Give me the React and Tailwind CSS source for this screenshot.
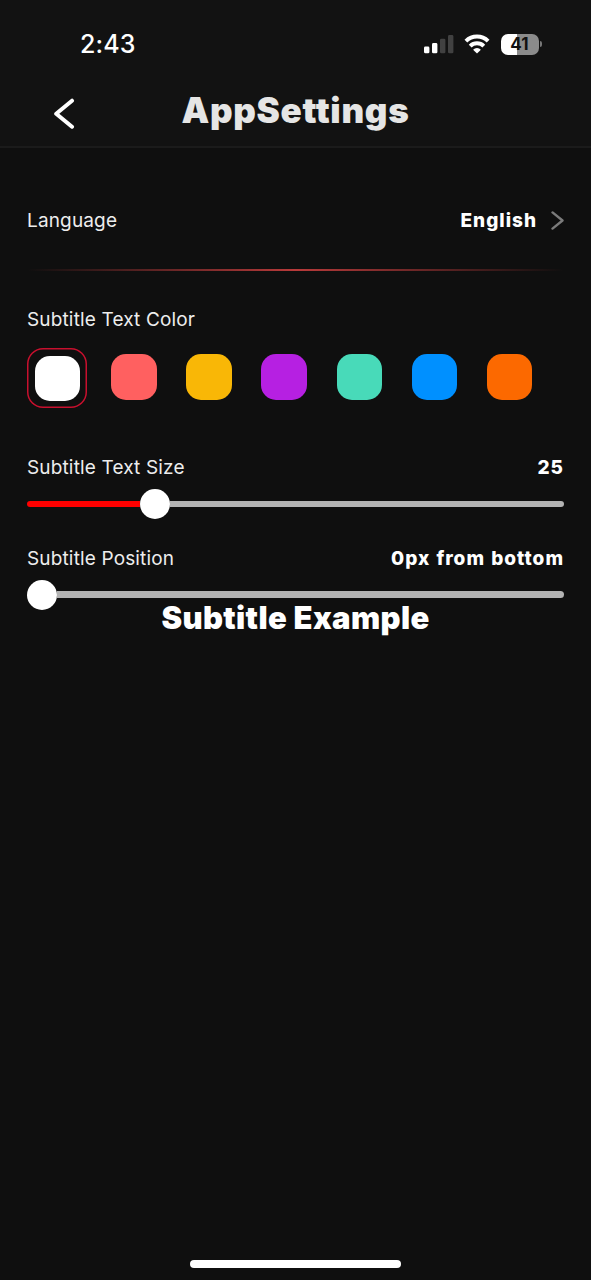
const colors = [
  "bg-white",
  "bg-[#ff6060]",
  "bg-[#f9b706]",
  "bg-[#b620e2]",
  "bg-[#48dab9]",
  "bg-[#0090ff]",
  "bg-[#fc6900]",
];

function StatusBar() {
  return (
    <div className="flex h-[80px] items-start justify-between pt-[29px] pr-[49px] pl-[80px]">
      <span className="text-[25px] leading-[30px] font-medium tracking-[0.1px]">2:43</span>
      <div className="flex h-[30px] items-center">
        <svg className="h-[20px] w-[30px]" viewBox="0 0 30 20">
          <rect x="0" y="12.5" width="5.4" height="6.8" rx="1.4" fill="#fff" />
          <rect x="8" y="9" width="5.4" height="10.3" rx="1.4" fill="#fff" />
          <rect x="16" y="4.7" width="5.4" height="14.6" rx="1.4" fill="#414141" />
          <rect x="24" y="1" width="5.4" height="18.3" rx="1.4" fill="#414141" />
        </svg>
        <svg className="ml-[10px] h-[20px] w-[26px]" viewBox="0 0 26 20" fill="none" stroke="#fff" strokeWidth="4">
          <path d="M1.9 7.1 A16 16 0 0 1 24.1 7.1" />
          <path d="M6.2 12.1 A9.8 9.8 0 0 1 19.8 12.1" />
          <path d="M13 19.4 L9.1 15.7 A5.6 5.6 0 0 1 16.9 15.7 Z" fill="#fff" stroke="none" />
        </svg>
        <div className="ml-[11px] flex h-[21px] w-[38px] items-center justify-center rounded-[7px] bg-linear-to-r from-white from-41% to-[#8b8b8b] to-41% text-[17px] leading-[21px] font-bold tracking-[0.2px] text-[#111]">
          41
        </div>
        <div className="ml-[1.5px] h-[6px] w-[2px] rounded-r-full bg-[#777]" />
      </div>
    </div>
  );
}

function Header() {
  return (
    <header className="h-[148px] border-b-2 border-[#1b1b1b] bg-[#121212]">
      <StatusBar />
      <div className="grid grid-cols-[170px_1fr_170px]">
        <button className="flex pt-[18px] pl-[53px]">
          <svg className="h-[32px] w-[22px]" viewBox="0 0 22 32" fill="none" stroke="#fff" strokeWidth="4" strokeLinecap="round" strokeLinejoin="round">
            <path d="M19 2.7 L3.2 15.7 L19 28.7" />
          </svg>
        </button>
        <h1 className="flex justify-center pt-[10px] text-[35px] leading-[40px] font-black tracking-[0.7px] whitespace-nowrap text-[#e5e5e5]">
          AppSettings
        </h1>
      </div>
    </header>
  );
}

function Row({ label, value, children }) {
  return (
    <div className="flex h-[30px] items-center justify-between text-[19px] leading-[30px] whitespace-nowrap">
      <span className="tracking-[0.15px] text-[#ededed]">{label}</span>
      <span className="flex items-center font-extrabold tracking-[1px] [word-spacing:1px]">
        {value}
        {children}
      </span>
    </div>
  );
}

function Slider({ percent }) {
  return (
    <div className="flex h-[30px] items-center">
      <div className="h-[6.5px] rounded-l-full bg-[#ff0000]" style={{ width: `${percent}%` }} />
      <div className="size-[30px] shrink-0 rounded-full bg-white" />
      <div className="h-[6.5px] flex-1 rounded-r-full bg-[#b3b3b3]" />
    </div>
  );
}

function App() {
  return (
    <div className="flex h-[1280px] w-[591px] flex-col bg-[#0f0f0f] font-['Inter',sans-serif] text-white">
      <Header />

      <main className="flex-1 px-[27px] pt-[58px]">
        <Row label="Language" value="English">
          <svg className="ml-[14px] h-[20px] w-[13px]" viewBox="0 0 13 20" fill="none" stroke="#7b7b7b" strokeWidth="2.4" strokeLinecap="round" strokeLinejoin="round">
            <path d="M1.5 1.4 L11.5 9.5 L1.5 17.6" />
          </svg>
        </Row>
        <div className="mt-[33px] mb-[34px] h-[2px] bg-linear-to-r from-transparent via-[#b83a3a] to-transparent" />

        <Row label="Subtitle Text Color" />
        <div className="mt-[13px] flex h-[60px]">
          {colors.map((color, i) =>
            i === 0 ? (
              <div key={color} className="mr-[24px] size-[60px] rounded-[16px] p-[7.5px] shadow-[inset_0_0_0_1.5px_#c8102e]">
                <div className={`${color} size-[45px] rounded-[15px]`} />
              </div>
            ) : (
              <div key={color} className={`${color} mt-[6px] mr-[29.7px] size-[45.5px] shrink-0 rounded-[15px]`} />
            )
          )}
        </div>

        <div className="mt-[45px]">
          <Row label="Subtitle Text Size" value="25" />
          <div className="mt-[6px]">
            <Slider percent={21} />
          </div>
        </div>

        <div className="mt-[25px]">
          <Row label="Subtitle Position" value="0px from bottom" />
          <div className="mt-[5.5px]">
            <Slider percent={0} />
          </div>
        </div>

        <p className="-mt-[12px] text-center text-[31px] leading-[40px] font-black tracking-[0.35px] whitespace-nowrap">
          Subtitle Example
        </p>
      </main>

      <div className="mx-auto mb-[12px] h-[8px] w-[211px] rounded-full bg-white" />
    </div>
  );
}

export default App;
